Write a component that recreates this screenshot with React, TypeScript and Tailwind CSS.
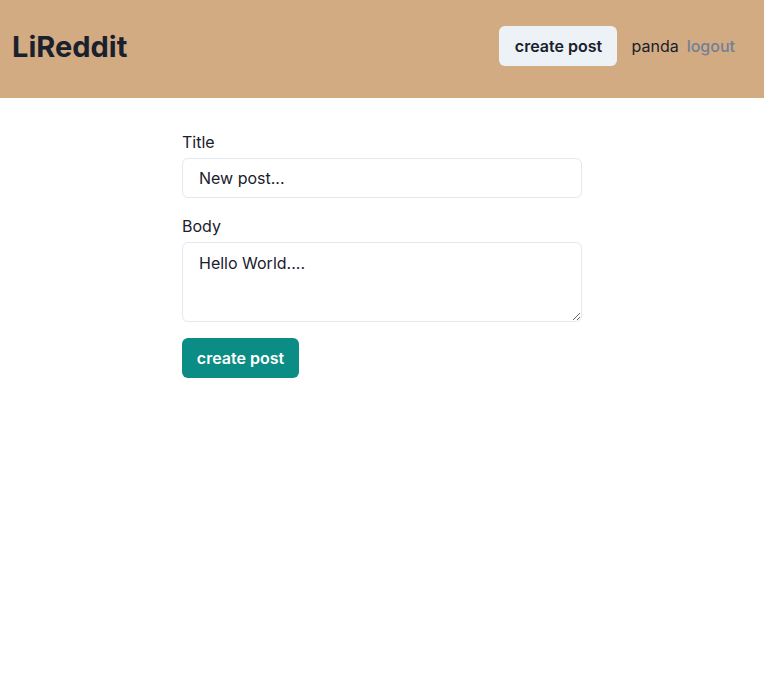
import { useState } from "react";

const NavBar = () => {
  return (
    <div className="flex h-[98px] items-center bg-[#d2ab83] pb-[6px] pl-3 pr-[29px]">
      <h1 className="text-[29px] font-bold leading-none text-[#1a202c]">LiReddit</h1>
      <div className="ml-auto flex items-center">
        <button className="h-10 w-[118px] rounded-md bg-[#edf2f7] text-base font-semibold text-[#1a202c]">
          create post
        </button>
        <span className="ml-[14px] text-base text-[#1a202c]">panda</span>
        <button className="ml-2 text-base font-medium text-[#718096]">logout</button>
      </div>
    </div>
  );
};

const App = () => {
  const [title, setTitle] = useState("");
  const [text, setText] = useState("");

  return (
    <div className="min-h-screen bg-white font-['Inter',sans-serif] text-[#1a202c]">
      <NavBar />
      <div className="mx-auto mt-8 w-full max-w-[400px]">
        <form onSubmit={(e) => e.preventDefault()}>
          <label className="mb-1 block text-base font-normal leading-6">Title</label>
          <input
            value={title}
            onChange={(e) => setTitle(e.target.value)}
            placeholder="New post..."
            className="block h-10 w-full rounded-md border border-[#e2e8f0] px-4 text-base outline-none placeholder:text-[#1a202c]"
          />
          <label className="mb-1 mt-4 block text-base font-normal leading-6">Body</label>
          <textarea
            value={text}
            onChange={(e) => setText(e.target.value)}
            placeholder="Hello World...."
            className="block h-20 w-full rounded-md border border-[#e2e8f0] px-4 pt-2 text-base leading-6 outline-none placeholder:text-[#1a202c]"
          />
          <button
            type="submit"
            className="mt-4 h-10 w-[117px] rounded-md bg-[#0b8c84] text-base font-semibold text-white"
          >
            create post
          </button>
        </form>
      </div>
    </div>
  );
};

export default App;
